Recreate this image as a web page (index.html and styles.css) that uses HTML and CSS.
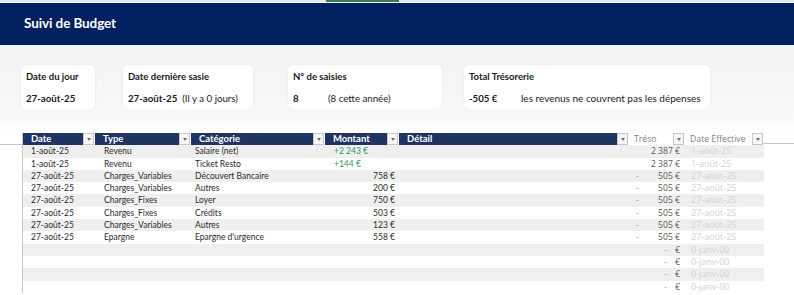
FILE: index.html
```html
<!DOCTYPE html>
<html lang="fr">
<head>
<meta charset="utf-8">
<title>Suivi de Budget</title>
<link rel="stylesheet" href="styles.css">
</head>
<body>
<div class="topstrip"><span class="tab-green"></span></div>
<header class="banner"><h1>Suivi de Budget</h1></header>

<section class="cards">
  <div class="card c1">
    <div class="label">Date du jour</div>
    <div class="value"><b>27-août-25</b></div>
  </div>
  <div class="card c2">
    <div class="label">Date dernière sasie</div>
    <div class="value"><b>27-août-25</b><span class="note">(Il y a 0 jours)</span></div>
  </div>
  <div class="card c3">
    <div class="label">N° de saisies</div>
    <div class="value"><b class="num">8</b><span class="note">(8 cette année)</span></div>
  </div>
  <div class="card c4">
    <div class="label">Total Trésorerie</div>
    <div class="value"><b class="num2">-505 €</b><span class="note">les revenus ne couvrent pas les dépenses</span></div>
  </div>
</section>

<section class="sheet">
  <div class="grid">
    <div class="th"><span>Date</span><i class="dd"></i></div>
    <div class="th"><span>Type</span><i class="dd"></i></div>
    <div class="th"><span>Catégorie</span><i class="dd"></i></div>
    <div class="th"><span>Montant</span><i class="dd"></i></div>
    <div class="th"><span>Détail</span><i class="dd"></i></div>
    <div class="th light"><span>Tréso</span><i class="dd"></i></div>
    <div class="th light"><span>Date Effective</span><i class="dd"></i></div>

    <div class="row odd"><span>1-août-25</span><span>Revenu</span><span>Salaire (net)</span><span class="amt pos">+2 243 €</span><span></span><span class="treso"><em></em>2 387 €</span><span class="eff">1-août-25</span></div>
    <div class="row"><span>1-août-25</span><span>Revenu</span><span>Ticket Resto</span><span class="amt pos">+144 €</span><span></span><span class="treso"><em></em>2 387 €</span><span class="eff">1-août-25</span></div>
    <div class="row odd"><span>27-août-25</span><span>Charges_Variables</span><span>Découvert Bancaire</span><span class="amt">758 €</span><span></span><span class="treso"><em>-</em>505 €</span><span class="eff">27-août-25</span></div>
    <div class="row"><span>27-août-25</span><span>Charges_Variables</span><span>Autres</span><span class="amt">200 €</span><span></span><span class="treso"><em>-</em>505 €</span><span class="eff">27-août-25</span></div>
    <div class="row odd"><span>27-août-25</span><span>Charges_Fixes</span><span>Loyer</span><span class="amt">750 €</span><span></span><span class="treso"><em>-</em>505 €</span><span class="eff">27-août-25</span></div>
    <div class="row"><span>27-août-25</span><span>Charges_Fixes</span><span>Crédits</span><span class="amt">503 €</span><span></span><span class="treso"><em>-</em>505 €</span><span class="eff">27-août-25</span></div>
    <div class="row odd"><span>27-août-25</span><span>Charges_Variables</span><span>Autres</span><span class="amt">123 €</span><span></span><span class="treso"><em>-</em>505 €</span><span class="eff">27-août-25</span></div>
    <div class="row"><span>27-août-25</span><span>Epargne</span><span>Epargne d'urgence</span><span class="amt">558 €</span><span></span><span class="treso"><em>-</em>505 €</span><span class="eff">27-août-25</span></div>
    <div class="row odd"><span></span><span></span><span></span><span></span><span></span><span class="treso empty"><em>-</em>€</span><span class="eff">0-janv-00</span></div>
    <div class="row"><span></span><span></span><span></span><span></span><span></span><span class="treso empty"><em>-</em>€</span><span class="eff">0-janv-00</span></div>
    <div class="row odd"><span></span><span></span><span></span><span></span><span></span><span class="treso empty"><em>-</em>€</span><span class="eff">0-janv-00</span></div>
    <div class="row"><span></span><span></span><span></span><span></span><span></span><span class="treso empty"><em>-</em>€</span><span class="eff">0-janv-00</span></div>
  </div>
</section>
</body>
</html>
```
FILE: styles.css
```css
* { box-sizing: border-box; }
html, body { margin: 0; padding: 0; }
body {
  width: 794px;
  height: 295px;
  overflow: hidden;
  background: #ffffff;
  font-family: Lato, "Noto Sans", sans-serif;
  color: #262626;
}

.topstrip {
  height: 3px;
  background: #e4e8ee;
  border-bottom: 1px solid #f4f6f9;
  position: relative;
}
.tab-green {
  position: absolute;
  left: 326px;
  top: 0;
  width: 73px;
  height: 2px;
  background: #3f7a57;
}

.banner {
  height: 42px;
  background: #002060;
  padding: 0 0 0 24px;
  display: flex;
  align-items: center;
}
.banner h1 {
  margin: 0 0 2px 0;
  font-size: 13.5px;
  font-weight: 700;
  color: #ffffff;
  letter-spacing: -0.1px;
}

.cards {
  display: flex;
  align-items: flex-start;
  padding: 20px 0 0 21px;
  height: 64px;
  background: linear-gradient(180deg, #f3f3f3 0%, #f5f5f5 60%, #f7f7f7 100%);
}
.card {
  height: 44px;
  background: #ffffff;
  border-radius: 5px;
  box-shadow: 0 0 3px rgba(0,0,0,0.06);
  padding: 5px 0 0 5px;
  font-size: 9.5px;
  color: #1a1a1a;
}
.c1 { width: 74px; }
.c2 { width: 130px; margin-left: 28px; }
.c3 { width: 154px; margin-left: 35px; }
.c4 { width: 246px; margin-left: 22px; }
.label {
  font-weight: 700;
  height: 14px;
  line-height: 14px;
}
.value {
  margin-top: 7px;
  height: 14px;
  line-height: 14px;
  font-size: 9.7px;
  white-space: nowrap;
}
.value b { font-weight: 700; }
.c2 .note { margin-left: 5px; }
.c3 .num { display: inline-block; width: 35px; }
.c4 .num2 { display: inline-block; width: 52px; }
.c4 .note { font-size: 10px; }

.sheet {
  height: 186px;
  padding: 24px 0 0 22px;
  background: linear-gradient(180deg, #f7f7f7 0px, #fbfbfb 14px, #ffffff 24px);
  position: relative;
}
.sheet::before {
  content: "";
  position: absolute;
  left: 0;
  top: 35px;
  width: 22px;
  height: 1px;
  background: #c8c8c8;
}
.sheet::after {
  content: "";
  position: absolute;
  left: 763px;
  top: 34px;
  width: 31px;
  height: 1px;
  background: #c8c8c8;
}

.grid {
  width: 741px;
  display: grid;
  grid-template-columns: 72px 96px 134px 74px 230px 56px 79px;
  grid-auto-rows: 12.3px;
  border-left: 1px solid #c8c8c8;
  border-right: 1px solid #d8d8d8;
}
.th {
  height: 12px;
  background: #1f3461;
  color: #ffffff;
  font-weight: 700;
  font-size: 9.5px;
  line-height: 12px;
  padding-left: 8px;
  position: relative;
  margin-right: 1px;
}
.th.light {
  background: #ffffff;
  color: #7f7f7f;
  font-weight: 400;
  font-family: "Open Sans", sans-serif;
  font-size: 8.7px;
  padding-left: 5px;
}
.dd {
  position: absolute;
  right: 0;
  top: 0;
  width: 11px;
  height: 12px;
  background: #f7f7f7;
  border: 1px solid #c6c6c6;
}
.dd::after {
  content: "";
  position: absolute;
  left: 3px;
  top: 4px;
  border-left: 2px solid transparent;
  border-right: 2px solid transparent;
  border-top: 3px solid #6b6b6b;
}

.row {
  display: contents;
}
.row > span {
  font-size: 8.5px;
  line-height: 12.3px;
  height: 12.3px;
  white-space: nowrap;
  color: #2b2b2b;
  padding-left: 8px;
  overflow: hidden;
  background: #ffffff;
}
.row.odd > span { background: #efefef; }
.row > span:nth-child(2) { padding-left: 9px; }
.row > span:nth-child(3) { padding-left: 4px; }
.row > span.amt {
  text-align: right;
  padding-right: 4px;
}
.row > span.amt.pos {
  text-align: left;
  padding-left: 9px;
  color: #2d9a55;
}
.row > span.treso {
  font-family: "Open Sans", sans-serif;
  font-size: 8.6px;
  color: #595959;
  text-align: right;
  padding-right: 5px;
  padding-left: 7px;
  display: flex;
  justify-content: space-between;
}
.row > span.treso em {
  font-style: normal;
  color: #9a9a9a;
}
.row > span.treso.empty {
  justify-content: flex-end;
}
.row > span.treso.empty em { margin-right: 8px; }
.row > span.eff {
  font-family: "Open Sans", sans-serif;
  font-size: 9px;
  color: #d2d2d2;
  padding-left: 6px;
}
```
